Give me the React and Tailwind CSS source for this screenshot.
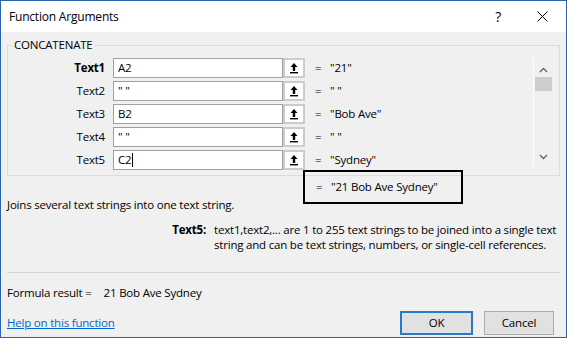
import React from 'react';

const RefButton = () => (
  <div className="w-[22px] h-[20px] border-2 border-[#cccccc] bg-white flex items-center justify-center shrink-0">
    <svg width="10" height="12" viewBox="0 0 10 12">
      <path d="M5 1 L1.5 5 H3.8 V9 H6.2 V5 H8.5 Z" fill="#000" />
      <rect x="1" y="10" width="8" height="1.4" fill="#000" />
    </svg>
  </div>
);

const args = [
  { name: 'Text1', input: 'A2', value: '"21"', bold: true },
  { name: 'Text2', input: '" "', value: '" "' },
  { name: 'Text3', input: 'B2', value: '"Bob Ave"' },
  { name: 'Text4', input: '" "', value: '" "' },
  { name: 'Text5', input: 'C2', value: '"Sydney"', caret: true },
];

const App = () => {
  return (
    <div
      className="w-[567px] h-[338px] border border-[#2a63ad] bg-[#f0f0f0] flex flex-col text-[11.5px] tracking-[-0.2px] text-black whitespace-nowrap overflow-hidden"
      style={{ fontFamily: '"Open Sans", "Noto Sans", sans-serif' }}
    >
      {/* Title bar */}
      <div className="h-[31px] bg-white flex items-center pl-[8px] pr-[18px] shrink-0">
        <span className="flex-1 text-[12px]">Function Arguments</span>
        <span className="text-[14px] mr-[36px]">?</span>
        <svg width="11" height="11" viewBox="0 0 11 11">
          <path d="M0.5 0.5 L10.5 10.5 M10.5 0.5 L0.5 10.5" stroke="#000" strokeWidth="1" />
        </svg>
      </div>

      {/* Group box */}
      <fieldset className="mx-[6px] mt-[5px] border border-[#dcdcdc] h-[139px] flex shrink-0">
        <legend className="ml-[4px] px-[2px] leading-[16px]">CONCATENATE</legend>
        <div className="flex-1 flex flex-col gap-[3px] pt-[5px]">
          {args.map((a) => (
            <div key={a.name} className="flex items-center h-[20px]">
              <div className={`w-[105px] text-right pr-[8px] ${a.bold ? 'font-bold' : ''}`}>{a.name}</div>
              <div className="w-[170px] h-[20px] border border-[#a0a0a0] bg-white flex items-center pl-[4px]">
                <span>{a.input}</span>
                {a.caret && <span className="w-px h-[14px] bg-black ml-px" />}
              </div>
              <RefButton />
              <span className="ml-[10px] w-[15px]">=</span>
              <span>{a.value}</span>
            </div>
          ))}
        </div>
        <div className="w-[19px] mr-[7px] mt-[5px] mb-[4px] border-l border-white flex flex-col items-center">
          <svg width="9" height="6" viewBox="0 0 9 6" className="mt-[9px]">
            <path d="M1 5 L4.5 1.5 L8 5" stroke="#606060" strokeWidth="1.3" fill="none" />
          </svg>
          <div className="w-[17px] h-[14px] bg-[#cdcdcd] mt-[4px]" />
          <div className="flex-1" />
          <svg width="9" height="6" viewBox="0 0 9 6" className="mb-[6px]">
            <path d="M1 1 L4.5 4.5 L8 1" stroke="#606060" strokeWidth="1.3" fill="none" />
          </svg>
        </div>
      </fieldset>

      {/* Highlighted result */}
      <div className="ml-[302px] -mt-[6px] w-[160px] h-[34px] border-2 border-black flex items-center pl-[11px] shrink-0">
        <span className="w-[15px]">=</span>
        <span>"21 Bob Ave Sydney"</span>
      </div>

      <div className="ml-[6px] -mt-[7px] leading-[16px] shrink-0">Joins several text strings into one text string.</div>

      <div className="flex mt-[9px] leading-[15px] shrink-0">
        <div className="w-[213px] text-right font-bold pr-[8px]">Text5:</div>
        <div>
          text1,text2,... are 1 to 255 text strings to be joined into a single text
          <br />
          string and can be text strings, numbers, or single-cell references.
        </div>
      </div>

      <div className="mx-[6px] mt-[20px] border-t border-[#d5d5d5] shrink-0" />

      <div className="ml-[6px] mt-[12px] flex leading-[16px] shrink-0">
        <span>Formula result =</span>
        <span className="ml-[12px]">21 Bob Ave Sydney</span>
      </div>

      <div className="flex items-center mt-[10px] pl-[6px] pr-[12px] shrink-0">
        <a className="flex-1 text-[#0066cc] underline">Help on this function</a>
        <button className="w-[73px] h-[24px] border-2 border-[#2a79c9] bg-[#e1e1e1] mr-[11px]">OK</button>
        <button className="w-[70px] h-[24px] border border-[#adadad] bg-[#e1e1e1]">Cancel</button>
      </div>
    </div>
  );
};

export default App;
